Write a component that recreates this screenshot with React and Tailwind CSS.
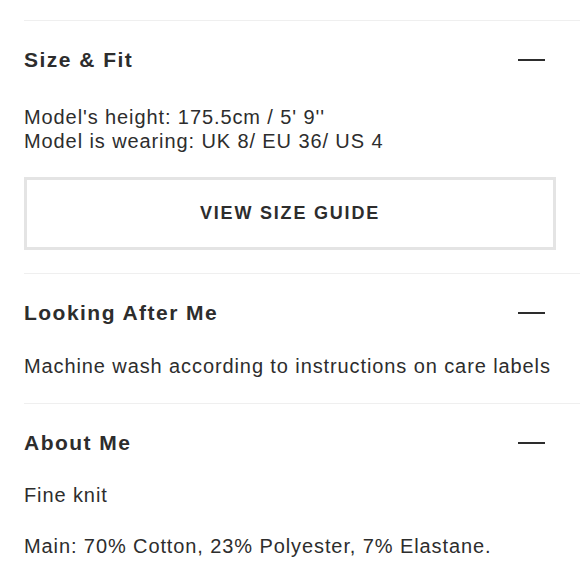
import React from 'react'

const font = { fontFamily: '"Liberation Sans", Arial, sans-serif' }

function Minus() {
  return <span className='block w-[27px] h-[2px] bg-[#2d2d2d] mr-[11px]'></span>
}

function Section({ title, children }) {
  return (
    <section className='ml-6 border-t border-[#efefef] pt-[27px] pr-6'>
      <div className='flex items-center justify-between h-6'>
        <h3 className='text-[21px] leading-6 font-bold tracking-[0.07em]'>{title}</h3>
        <Minus />
      </div>
      {children}
    </section>
  )
}

export default function App() {
  return (
    <div className='w-[580px] h-[580px] bg-white text-[#2d2d2d] overflow-hidden pt-5 text-[20px] tracking-[0.045em]' style={font}>
      <Section title='Size & Fit'>
        <div className='mt-[33px] leading-6'>
          <p>Model's height: 175.5cm / 5' 9''</p>
          <p>Model is wearing: UK 8/ EU 36/ US 4</p>
        </div>
        <button className='mt-[24px] mb-[23px] w-full h-[73px] border-[3px] border-[#e4e4e4] flex items-center justify-center text-[18px] font-bold tracking-[0.1em]'>
          VIEW SIZE GUIDE
        </button>
      </Section>
      <Section title='Looking After Me'>
        <p className='mt-[29px] mb-[25px] leading-6'>Machine wash according to instructions on care labels</p>
      </Section>
      <Section title='About Me'>
        <p className='mt-[28px] leading-6'>Fine knit</p>
        <p className='mt-[27px] leading-6'>Main: 70% Cotton, 23% Polyester, 7% Elastane.</p>
      </Section>
    </div>
  )
}
